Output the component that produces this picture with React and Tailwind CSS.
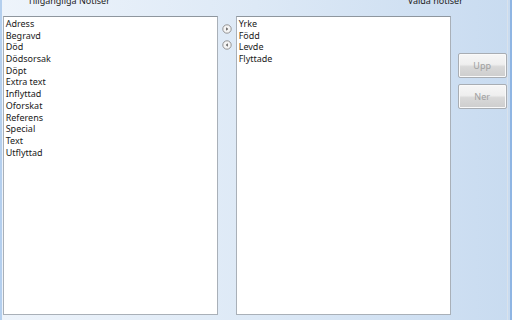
import React from "react";

const left = ["Adress","Begravd","Död","Dödsorsak","Döpt","Extra text","Inflyttad","Oforskat","Referens","Special","Text","Utflyttad"];
const right = ["Yrke","Född","Levde","Flyttade"];

function Arrow({ dir }) {
  return (
    <svg width="10" height="10" viewBox="0 0 10 10">
      <circle cx="5" cy="5" r="4.2" fill="#f4f4f4" stroke="#8a8a8a" strokeWidth="0.9" />
      {dir === "r" ? (
        <path d="M4.2 3.2 L6.2 5 L4.2 6.8 Z" fill="#555" />
      ) : (
        <path d="M5.8 3.2 L3.8 5 L5.8 6.8 Z" fill="#555" />
      )}
    </svg>
  );
}

function List({ items }) {
  return (
    <div className="h-full bg-white border border-[#a9b0b8] border-t-[#8e969e] pl-[2px] pt-[1px]">
      {items.map((t) => (
        <div key={t} className="h-[11.7px] leading-[11.7px] text-[9px] text-[#1a1a1a]">{t}</div>
      ))}
    </div>
  );
}

function Btn({ label }) {
  return (
    <div className="w-[49px] h-[25px] rounded-[2px] border border-[#a8adb3] bg-[linear-gradient(to_bottom,#f6f6f6_0%,#efefef_45%,#d9d9d9_55%,#cdcdcd_100%)] flex items-center justify-center text-[9px] text-[#a0a0a0] shadow-[inset_0_0_0_1px_#fafafa]">
      {label}
    </div>
  );
}

export default function App() {
  return (
    <div
      className="w-[512px] h-[320px] overflow-hidden flex bg-gradient-to-r from-[#eef4fb] via-[#dde9f6] to-[#c8dbf0]"
      style={{ fontFamily: '"Noto Sans", "Open Sans", sans-serif' }}
    >
      <div className="w-[2px] h-full bg-[#b4cfee]" />
      <div className="flex-1 flex flex-col">
        <div className="h-[16px] flex items-end relative">
          <span className="absolute left-[26px] top-[-6px] text-[9px] text-[#222]">Tillgängliga Notiser</span>
          <span className="absolute left-[406px] top-[-6px] text-[9px] text-[#222]">Valda notiser</span>
        </div>
        <div className="flex h-[299px]">
          <div className="w-[1px]" />
          <div className="w-[215px]"><List items={left} /></div>
          <div className="w-[18px] flex flex-col items-center pt-[8px] gap-[6px]">
            <Arrow dir="r" />
            <Arrow dir="l" />
          </div>
          <div className="w-[215px]"><List items={right} /></div>
          <div className="w-[7px]" />
          <div className="flex flex-col gap-[6px] pt-[37px]">
            <Btn label="Upp" />
            <Btn label="Ner" />
          </div>
        </div>
      </div>
      <div className="w-[1px] h-full bg-[#d9e2ec] mr-[2px]" />
      <div className="w-[3px] h-full bg-[#8fb5e3]" />
    </div>
  );
}
